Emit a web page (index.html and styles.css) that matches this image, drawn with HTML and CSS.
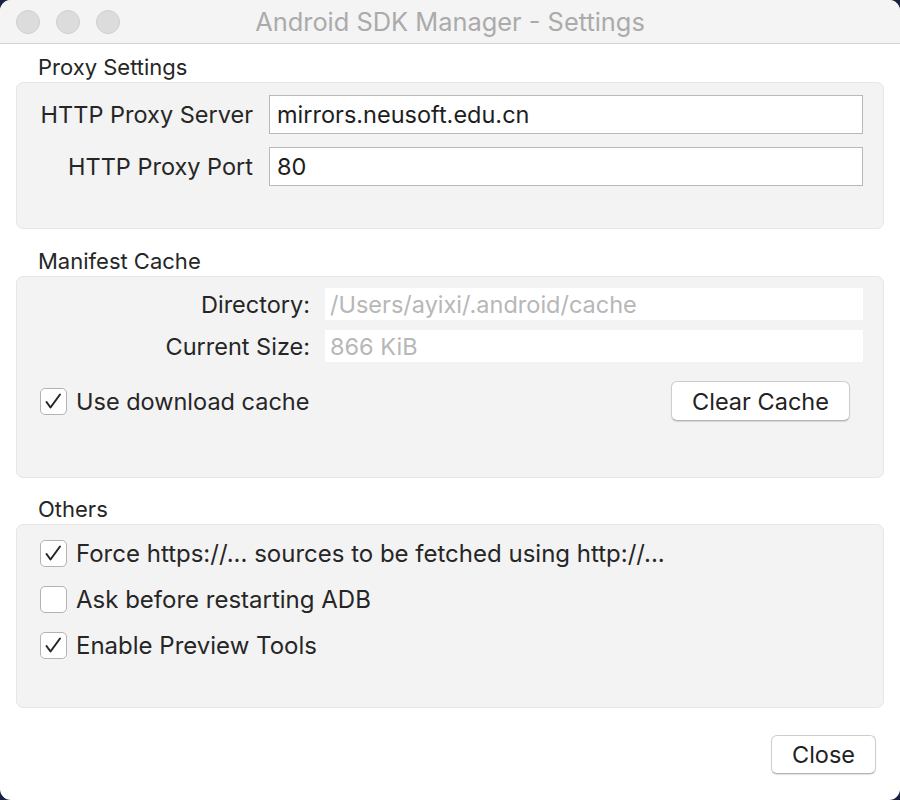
FILE: index.html
```html
<!DOCTYPE html>
<html>
<head>
<meta charset="utf-8">
<link rel="stylesheet" href="styles.css">
</head>
<body>
<div class="window">
  <div class="titlebar">
    <div class="lights">
      <span class="light"></span><span class="light"></span><span class="light"></span>
    </div>
    <div class="title">Android SDK Manager - Settings</div>
    <div></div>
  </div>
  <div class="content">
    <div class="section-label first">Proxy Settings</div>
    <div class="group proxy">
      <div class="form-grid proxy-grid">
        <label class="lbl">HTTP Proxy Server</label>
        <div class="input">mirrors.neusoft.edu.cn</div>
        <label class="lbl">HTTP Proxy Port</label>
        <div class="input">80</div>
      </div>
    </div>

    <div class="section-label">Manifest Cache</div>
    <div class="group cache">
      <div class="form-grid cache-grid">
        <label class="lbl">Directory:</label>
        <div class="field">/Users/ayixi/.android/cache</div>
        <label class="lbl">Current Size:</label>
        <div class="field">866 KiB</div>
      </div>
      <div class="cache-row">
        <div class="check-item">
          <span class="box checked"><svg viewBox="0 0 27 27" width="27" height="27"><path d="M6.5 14 L10.5 19.5 L20 6.5" fill="none" stroke="#262626" stroke-width="2" stroke-linecap="round" stroke-linejoin="round"/></svg></span>
          <span class="small-tight">Use download cache</span>
        </div>
        <button class="btn clear">Clear Cache</button>
      </div>
    </div>

    <div class="section-label last">Others</div>
    <div class="group others">
      <div class="check-item">
        <span class="box checked"><svg viewBox="0 0 27 27" width="27" height="27"><path d="M6.5 14 L10.5 19.5 L20 6.5" fill="none" stroke="#262626" stroke-width="2" stroke-linecap="round" stroke-linejoin="round"/></svg></span>
        <span>Force https://... sources to be fetched using http://...</span>
      </div>
      <div class="check-item">
        <span class="box"></span>
        <span>Ask before restarting ADB</span>
      </div>
      <div class="check-item">
        <span class="box checked"><svg viewBox="0 0 27 27" width="27" height="27"><path d="M6.5 14 L10.5 19.5 L20 6.5" fill="none" stroke="#262626" stroke-width="2" stroke-linecap="round" stroke-linejoin="round"/></svg></span>
        <span>Enable Preview Tools</span>
      </div>
    </div>

    <div class="footer">
      <button class="btn close">Close</button>
    </div>
  </div>
</div>
</body>
</html>
```
FILE: styles.css
```css
html, body {
  margin: 0;
  padding: 0;
  background: #1c2140;
}
.window {
  width: 900px;
  height: 800px;
  background: #ffffff;
  border-radius: 11px;
  overflow: hidden;
  font-family: Inter, "Noto Sans", sans-serif;
  color: #262626;
  display: flex;
  flex-direction: column;
}
.titlebar {
  height: 43px;
  background: #f4f4f4;
  border-bottom: 1px solid #d3d3d3;
  display: grid;
  grid-template-columns: 1fr auto 1fr;
  align-items: center;
}
.lights {
  display: flex;
  gap: 16px;
  padding-left: 16px;
}
.light {
  width: 22px;
  height: 22px;
  border-radius: 50%;
  background: #dcdcdc;
  border: 1px solid #cfcfcf;
}
.title {
  font-size: 25.4px;
  color: #ababab;
  line-height: 30px;
  margin-top: 1px;
}
.content {
  padding: 0 16px;
  flex: 1;
  display: flex;
  flex-direction: column;
}
.section-label {
  font-size: 22px;
  line-height: 26px;
  margin: 19px 0 2px 22px;
  color: #262626;
}
.section-label.first {
  margin-top: 10px;
}
.section-label.last {
  margin-top: 18px;
}
.group {
  background: #f3f3f3;
  border: 1px solid #e6e6e6;
  border-radius: 7px;
}
.form-grid {
  display: grid;
  align-items: center;
}
.lbl {
  text-align: right;
  white-space: nowrap;
}
.proxy {
  padding: 12px 20px 42px 0;
  font-size: 23.5px;
}
.proxy-grid {
  grid-template-columns: 236px 1fr;
  column-gap: 16px;
  row-gap: 13px;
}
.input {
  height: 37px;
  border: 1px solid #b9b9b9;
  background: #ffffff;
  display: flex;
  align-items: center;
  padding-left: 7px;
  font-size: 23.5px;
  color: #1e1e1e;
}
.cache {
  padding: 11px 20px 56px 0;
  font-size: 23.5px;
}
.cache-grid {
  grid-template-columns: 293px 1fr;
  column-gap: 15px;
  row-gap: 10px;
}
.field {
  height: 32px;
  background: #ffffff;
  display: flex;
  align-items: center;
  padding-left: 5px;
  color: #b7b7b7;
}
.cache-row {
  display: flex;
  justify-content: space-between;
  align-items: center;
  margin-top: 19px;
  padding-left: 23px;
  padding-right: 13px;
}
.check-item {
  display: flex;
  align-items: center;
  gap: 9px;
  font-size: 24px;
  height: 27px;
}
.small-tight {
  font-size: 23.5px;
}
.box {
  width: 27px;
  height: 27px;
  box-sizing: border-box;
  border: 1px solid #b3b3b3;
  border-radius: 5px;
  background: #ffffff;
  position: relative;
  flex: none;
}
.box svg {
  display: block;
  position: absolute;
  left: -1px;
  top: -1px;
}
.btn {
  font-family: Inter, "Noto Sans", sans-serif;
  font-size: 23.5px;
  color: #222;
  background: #ffffff;
  border: 1px solid #cdcdcd;
  border-bottom-color: #b5b5b5;
  border-radius: 6px;
  box-shadow: 0 1px 1px rgba(0,0,0,0.12);
  padding: 0;
}
.clear {
  width: 179px;
  height: 40px;
}
.others {
  padding: 15px 0 48px 23px;
  display: flex;
  flex-direction: column;
  gap: 19px;
}
.footer {
  display: flex;
  justify-content: flex-end;
  margin-top: 27px;
  padding-right: 8px;
}
.close {
  width: 105px;
  height: 39px;
}
```
